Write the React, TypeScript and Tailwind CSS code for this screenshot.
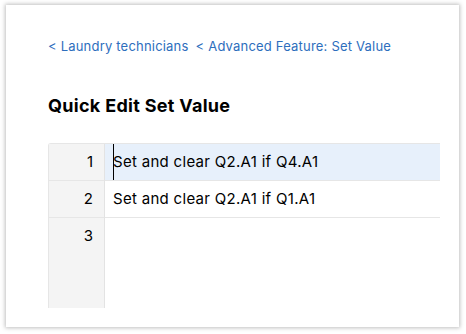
export default function App() {
  const rows = [
    { n: 1, text: "Set and clear Q2.A1 if Q4.A1", active: true },
    { n: 2, text: "Set and clear Q2.A1 if Q1.A1", active: false },
  ];

  return (
    <div className="w-[466px] h-[334px] bg-white pt-[5px] pl-[6px]" style={{ fontFamily: "Inter, 'Liberation Sans', sans-serif" }}>
      <div className="w-[453px] h-[322px] bg-white shadow-[0_0_4px_1px_rgba(0,0,0,0.25)] pl-[42px] pt-[33px]">
        <div className="flex gap-[7px] text-[13px] tracking-[0.2px] text-[#2d6ebd] leading-[16px]">
          <span>&lt; Laundry technicians</span>
          <span>&lt; Advanced Feature: Set Value</span>
        </div>

        <h1 className="mt-[42px] text-[18px] tracking-[0.3px] font-bold text-black leading-[20px]">
          Quick Edit Set Value
        </h1>

        <div className="mt-[27px] w-[392px] flex border-l border-t border-[#e6e6e6] rounded-tl-[3px]">
          <div className="w-[56px] h-[164px] bg-[#f4f4f4] border-r border-[#e3e3e3] flex flex-col">
            {[1, 2, 3].map((n) => (
              <div key={n} className="h-[37px] border-b border-[#e6e6e6] last:border-b-0 flex items-center justify-end pr-[11px] text-[15px] text-black">
                {n}
              </div>
            ))}
          </div>
          <div className="flex-1 flex flex-col">
            {rows.map((r) => (
              <div
                key={r.n}
                className={`h-[37px] border-b border-[#e6e6e6] flex items-center pl-[8px] text-[15px] tracking-[0.3px] text-black ${r.active ? "bg-[#e7f0fb]" : ""}`}
              >
                {r.active && <span className="w-px h-[36px] bg-black mr-[-1px]" />}
                {r.text}
              </div>
            ))}
          </div>
        </div>
      </div>
    </div>
  );
}
